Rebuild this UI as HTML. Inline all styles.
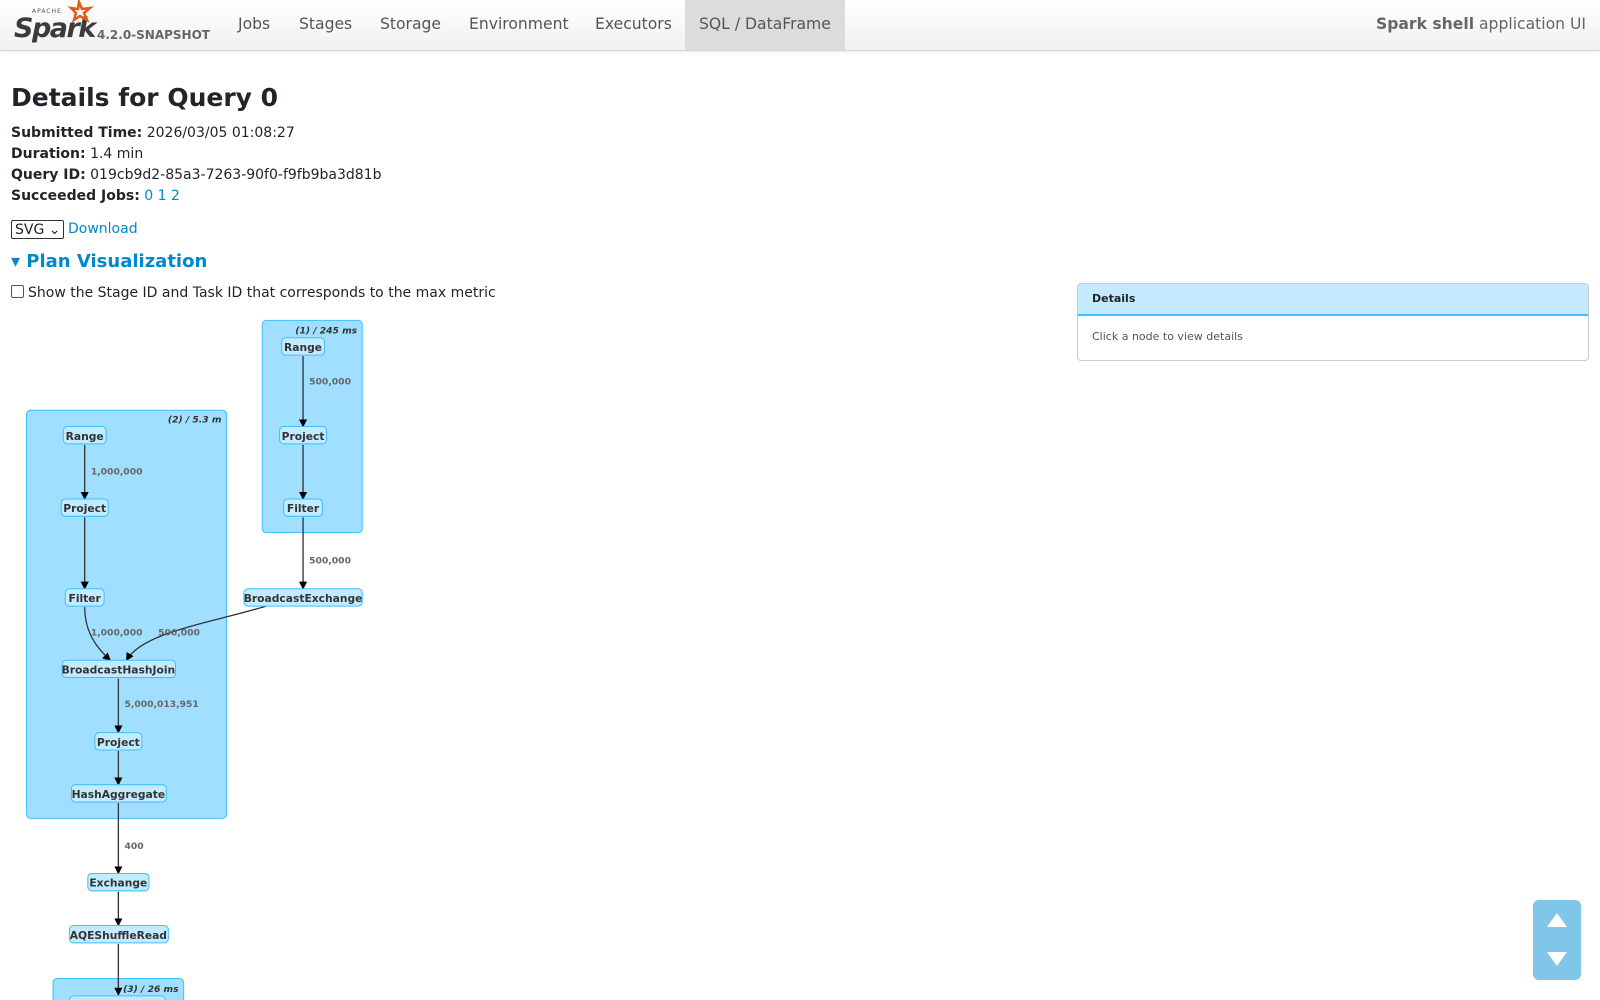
<!DOCTYPE html>
<html><head><meta charset="utf-8"><style>
body{margin:0;font-family:"DejaVu Sans","Liberation Sans",sans-serif;color:#212529;background:#fff;width:1600px;height:1000px;overflow:hidden;position:relative}
.nav{height:50px;border-bottom:1px solid #d5d5d5;background:linear-gradient(#fff,#f1f1f1);position:relative;box-shadow:0 1px 3px rgba(0,0,0,.08)}
.nav a{position:absolute;top:0;height:50px;line-height:49px;font-size:15.6px;color:#555;text-decoration:none}
.act{background:#dcdcdc;padding:0 14px}
.ver{position:absolute;left:97px;top:28px;font-size:12px;font-weight:bold;color:#666}
.app{position:absolute;right:14px;top:15px;font-size:15.6px;color:#666}
h3{position:absolute;left:11px;top:83px;margin:0;font-size:25px;font-weight:bold}
.info{position:absolute;left:11px;top:123px;font-size:14px;line-height:21px}
a.l{color:#0088cc;text-decoration:none}
.sel{position:absolute;left:11px;top:220px;height:19px;border:1px solid #333;border-radius:2px;font-size:14px;line-height:18px;padding-left:3px;box-sizing:border-box;width:53px}
.pv{position:absolute;left:11px;top:251px;font-size:18px;font-weight:bold;color:#0088cc}
.chk{position:absolute;left:11px;top:285px;font-size:14px}
.chk span{display:inline-block;width:11px;height:11px;border:1px solid #555;border-radius:2px;vertical-align:-1px;margin-right:4px}
.det{position:absolute;left:1077px;top:283px;width:510px;height:76px;border:1px solid #ccc;border-radius:4px;overflow:hidden}
.det .h{background:#c3eaff;border-bottom:2px solid #3ec0ff;height:30px;line-height:30px;padding-left:14px;font-size:11px;font-weight:bold}
.det .b{padding:14px 14px;font-size:11px;color:#555}
.arr{position:absolute;left:1533px;top:900px;width:48px;height:80px;background:#7fc6e8;border-radius:6px}
</style></head><body>
<div class="nav">
<svg width="95" height="45" style="position:absolute;left:12px;top:0">
<text x="20" y="13" font-size="6" fill="#555" font-family="DejaVu Sans" letter-spacing="1">APACHE</text>
<text x="2" y="37" font-size="27" font-style="italic" font-weight="bold" fill="#3c3a3e" font-family="DejaVu Sans" letter-spacing="-1.5">Spark</text>
<polygon points="67,2 70,9 78,8 72,13 75,20 68,16 62,20 64,13 59,8 66,9" fill="none" stroke="#e25a1c" stroke-width="2.5"/>
</svg>
<span class="ver">4.2.0-SNAPSHOT</span>
<a style="left:238px">Jobs</a><a style="left:299px">Stages</a><a style="left:380px">Storage</a><a style="left:469px">Environment</a><a style="left:595px">Executors</a><a class="act" style="left:685px">SQL / DataFrame</a>
<span class="app"><b>Spark shell</b> application UI</span>
</div>
<h3>Details for Query 0</h3>
<div class="info"><b>Submitted Time:</b> 2026/03/05 01:08:27<br><b>Duration:</b> 1.4 min<br><b>Query ID:</b> 019cb9d2-85a3-7263-90f0-f9fb9ba3d81b<br><b>Succeeded Jobs:</b> <a class="l">0</a> <a class="l">1</a> <a class="l">2</a></div>
<div class="sel">SVG ⌄</div><a class="l" style="position:absolute;left:68px;top:221px;font-size:14px">Download</a>
<div class="pv">▾ Plan Visualization</div>
<div class="chk"><span></span>Show the Stage ID and Task ID that corresponds to the max metric</div>
<div class="det"><div class="h">Details</div><div class="b">Click a node to view details</div></div>
<svg width="420" height="700" style="position:absolute;left:0;top:300px" font-family="DejaVu Sans">
<defs><marker id="m" markerWidth="8" markerHeight="8" refX="7" refY="4" orient="auto" markerUnits="userSpaceOnUse"><path d="M0,0L8,4L0,8z" fill="#000"/></marker></defs>
<g transform="translate(0,-300) scale(1.0204)">
<rect x="257" y="314" width="98" height="208" rx="4" fill="#a0dfff" stroke="#3ec0ff"/>
<rect x="26" y="402" width="196" height="400" rx="4" fill="#a0dfff" stroke="#3ec0ff"/>
<rect x="52" y="959" width="128" height="60" rx="4" fill="#a0dfff" stroke="#3ec0ff"/>
<g font-size="9" font-weight="bold" font-style="italic" fill="#333" text-anchor="end">
<text x="350" y="327">(1) / 245 ms</text><text x="217" y="414">(2) / 5.3 m</text><text x="175" y="972">(3) / 26 ms</text></g>
<g stroke="#333" stroke-width="1.3" fill="none" marker-end="url(#m)">
<path d="M297,349V418"/><path d="M297,436V489"/><path d="M297,507V577"/>
<path d="M83,436V489"/><path d="M83,507V577"/>
<path d="M83,595C83,620 95,635 108,647"/><path d="M261,594C200,612 140,620 124,647"/>
<path d="M116,665V718"/><path d="M116,736V769"/><path d="M116,787V856"/><path d="M116,874V907"/><path d="M116,925V975"/>
</g>
<g font-size="9" font-weight="bold" fill="#666">
<text x="303" y="377">500,000</text><text x="303" y="552">500,000</text><text x="89" y="465">1,000,000</text>
<text x="89" y="623">1,000,000</text><text x="155" y="623">500,000</text><text x="122" y="693">5,000,013,951</text><text x="122" y="832">400</text></g>
<g fill="#c3ebff" stroke="#3ec0ff">
<rect x="276" y="331" width="42" height="17" rx="4"/><rect x="274" y="418" width="46" height="17" rx="4"/><rect x="278" y="489" width="38" height="17" rx="4"/>
<rect x="239" y="577" width="116" height="17" rx="4"/>
<rect x="62" y="418" width="42" height="17" rx="4"/><rect x="60" y="489" width="46" height="17" rx="4"/><rect x="64" y="577" width="38" height="17" rx="4"/>
<rect x="61" y="647" width="111" height="17" rx="4"/><rect x="93" y="718" width="46" height="17" rx="4"/><rect x="70" y="769" width="93" height="17" rx="4"/>
<rect x="86" y="856" width="60" height="17" rx="4"/><rect x="68" y="907" width="97" height="17" rx="4"/><rect x="68" y="976" width="94" height="17" rx="4"/>
</g>
<g font-size="10.5" font-weight="bold" fill="#333" text-anchor="middle">
<text x="297" y="344">Range</text><text x="297" y="431">Project</text><text x="297" y="502">Filter</text><text x="297" y="590">BroadcastExchange</text>
<text x="83" y="431">Range</text><text x="83" y="502">Project</text><text x="83" y="590">Filter</text>
<text x="116" y="660">BroadcastHashJoin</text><text x="116" y="731">Project</text><text x="116" y="782">HashAggregate</text>
<text x="116" y="869">Exchange</text><text x="116" y="920">AQEShuffleRead</text></g>
</g></svg>
<div class="arr"><svg width="48" height="80"><polygon points="24,13 34,27 14,27" fill="#fff"/><polygon points="24,66 34,52 14,52" fill="#fff"/></svg></div>
</body></html>
